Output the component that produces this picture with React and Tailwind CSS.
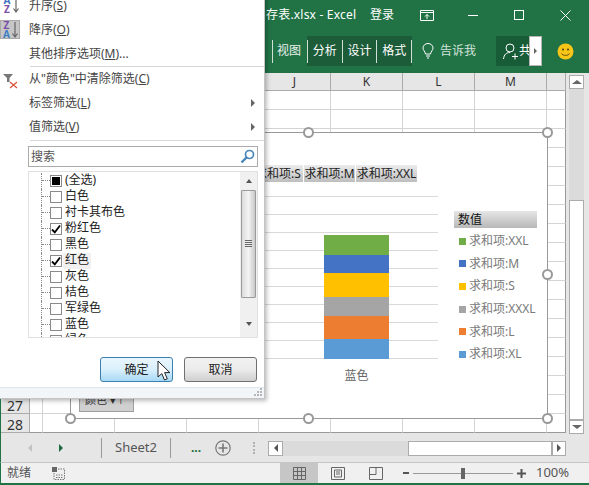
const rows = Array.from({ length: 18 }, (_, i) => i + 11);
const cols = [13, 72, 72, 72, 72, 72, 72, 72, 19];
const headers = ["", "", "", "", "J", "K", "L", "M", ""];
const listItems = [
  ["(全选)", "mixed"], ["白色", ""], ["衬卡其布色", ""], ["粉红色", "on"], ["黑色", ""], ["红色", "on", true],
  ["灰色", ""], ["桔色", ""], ["军绿色", ""], ["蓝色", ""], ["绿色", ""],
];
const legend = [
  ["求和项:XXL", "bg-[#70ad47]"], ["求和项:M", "bg-[#4472c4]"], ["求和项:S", "bg-[#ffc000]"],
  ["求和项:XXXL", "bg-[#a5a5a5]"], ["求和项:L", "bg-[#ed7d31]"], ["求和项:XL", "bg-[#5b9bd5]"],
];

function Handle({ className }) {
  return <span className={"absolute w-[11px] h-[11px] rounded-full bg-white border-2 border-[#999] " + className} />;
}

function MenuRow({ icon, label, arrow }) {
  return (
    <div className="h-6 flex items-center relative pl-[29px] pr-[9px] text-[12px] text-[#444]">
      {icon}
      <span className="flex-1 whitespace-nowrap pt-px">{label}</span>
      {arrow && <span className="w-0 h-0 border-y-[4px] border-y-transparent border-l-[4px] border-l-[#666]" />}
    </div>
  );
}

function Sort({ top, bottom, topC, bottomC, boxed }) {
  return (
    <span className={"absolute left-0 top-[3px] h-[19px] flex " + (boxed ? "w-[20px] bg-[#c6c6c6] border border-[#aaa] pl-[2px]" : "w-[18px]")}>
      <span className="flex flex-col w-[8px] items-center text-[10px] leading-[9px] font-bold">
        <span className={topC}>{top}</span>
        <span className={bottomC}>{bottom}</span>
      </span>
      <svg width="8" height="18" viewBox="0 0 8 18" className="ml-[1px] shrink-0">
        <path d="M4 1V16M1.5 12.5L4 16L6.5 12.5" stroke="#666" fill="none" strokeWidth="1.2" />
      </svg>
    </span>
  );
}

function FilterMenu() {
  return (
    <div className="absolute left-0 -top-[6px] w-[265px] h-[405px] bg-white border-r border-b border-[#c4c4c4] shadow-[2px_2px_4px_rgba(0,0,0,0.25)] flex flex-col z-20">
      <MenuRow label={<span>升序(<u>S</u>)</span>} icon={<span className="absolute left-[3px] -top-[1px]"><Sort top="A" bottom="Z" topC="text-[#4472c4]" bottomC="text-[#7b4fa8]" /></span>} />
      <MenuRow label={<span>降序(<u>O</u>)</span>} icon={<span className="absolute left-0 -top-[1px]"><Sort boxed top="Z" bottom="A" topC="text-[#7b4fa8]" bottomC="text-[#3f7fc4]" /></span>} />
      <MenuRow label={<span>其他排序选项(<u>M</u>)...</span>} />
      <div className="h-px bg-[#d8d8d8] ml-[30px]" />
      <MenuRow
        label={<span>从"颜色"中清除筛选(<u>C</u>)</span>}
        icon={
          <svg width="16" height="16" viewBox="0 0 16 16" className="absolute left-[3px] top-[6px]">
            <path d="M0 1H10L6.5 5V9H4V5Z" fill="#777" />
            <path d="M7 9L14 15M14 9L7 15" stroke="#d9533b" strokeWidth="1.2" />
          </svg>
        }
      />
      <MenuRow label={<span>标签筛选(<u>L</u>)</span>} arrow />
      <MenuRow label={<span>值筛选(<u>V</u>)</span>} arrow />
      <div className="h-px bg-[#d8d8d8] ml-[30px] mt-px" />
      <div className="ml-[28px] mt-[5px] w-[230px] h-[21px] border border-[#ababab] flex items-center justify-between pl-[2px] pr-[2px] text-[12px] text-[#555]">
        <span className="pt-px">搜索</span>
        <svg width="15" height="15" viewBox="0 0 15 15">
          <circle cx="9.5" cy="5.5" r="4" fill="none" stroke="#4a86b8" strokeWidth="1.7" />
          <path d="M6.5 8.5L1.5 13.5" stroke="#4a86b8" strokeWidth="2.4" />
        </svg>
      </div>
      <div className="relative ml-[28px] mt-[4px] w-[230px] h-[168px] border border-[#e0e0e0] flex overflow-hidden">
        <div className="flex-1 pl-[12px] pt-px flex flex-col">
          {listItems.map(([t, s, hl]) => (
            <div key={t} className="h-4 shrink-0 flex items-center text-[12px] text-[#222]">
              <span className="w-[9px] h-full border-l border-dotted border-[#888] flex items-center">
                <span className="w-full border-t border-dotted border-[#888]" />
              </span>
              <span className="w-[12px] h-[12px] border border-[#8a8a8a] bg-white flex items-center justify-center">
                {s === "mixed" && <span className="w-[8px] h-[8px] bg-black" />}
                {s === "on" && (
                  <svg width="10" height="10" viewBox="0 0 10 10">
                    <path d="M1 5.5L3.8 8.3L9 1.5" fill="none" stroke="#000" strokeWidth="1.8" />
                  </svg>
                )}
              </span>
              <span className={"ml-[1px] px-[2px] h-4 leading-[14px] " + (hl ? "bg-[#f0f0f0]" : "")}>{t}</span>
            </div>
          ))}
        </div>
        <div className="w-[17px] bg-[#f0f0f0] flex flex-col items-center">
          <span className="h-[18px] flex items-center justify-center">
            <span className="w-0 h-0 border-x-[3.5px] border-x-transparent border-b-[4px] border-b-[#555]" />
          </span>
          <span className="w-[15px] h-[108px] rounded-[1px] border border-[#9a9a9a] bg-gradient-to-r from-[#dcdcdc] via-[#f4f4f4] to-[#c8c8c8] flex flex-col items-center justify-center gap-[1px]">
            <span className="w-[7px] h-px bg-[#666]" /><span className="w-[7px] h-px bg-[#666]" /><span className="w-[7px] h-px bg-[#666]" /><span className="w-[7px] h-px bg-[#666]" />
          </span>
          <span className="flex-1 flex items-center justify-center pt-[14px]">
            <span className="w-0 h-0 border-x-[3.5px] border-x-transparent border-t-[4px] border-t-[#555]" />
          </span>
        </div>
      </div>
      <div className="mt-[19px] flex pl-[100px] gap-[11px] text-[12px] text-[#222]">
        <button className="w-[73px] h-[25px] rounded-[3px] border border-[#3c7fb1] bg-gradient-to-b from-[#eaf6fd] via-[#d9f0fc] to-[#a7d9f5] text-center">确定</button>
        <button className="w-[73px] h-[25px] rounded-[3px] border border-[#707070] bg-gradient-to-b from-[#f2f2f2] via-[#ebebeb] to-[#cfcfcf] text-center">取消</button>
      </div>
      <div className="mt-[5px] flex-1 bg-[#f3f6f9] border-t border-[#dce7f0] flex items-end justify-end pr-[2px] pb-[2px]">
        <svg width="8" height="8" viewBox="0 0 8 8"><path d="M6 0h2v2H6zM3 3h2v2H3zM6 3h2v2H6zM0 6h2v2H0zM3 6h2v2H3zM6 6h2v2H6z" fill="#b5b5b5" /></svg>
      </div>
      <svg width="14" height="21" viewBox="0 0 14 21" className="absolute left-[157px] top-[366px]">
        <path d="M1 1V17L4.8 13.6L7.5 20L10.3 18.8L7.6 12.6H12.8Z" fill="#fff" stroke="#222" strokeWidth="1" />
      </svg>
    </div>
  );
}

function Chart() {
  return (
    <div className="absolute left-[70px] top-[132px] w-[478px] h-[287px] bg-white border border-[#999] flex z-10 text-[12px]">
      <Handle className="-left-[6px] -top-[6px]" />
      <Handle className="left-[232px] -top-[6px]" />
      <Handle className="-right-[6px] -top-[6px]" />
      <Handle className="-right-[6px] top-[136px]" />
      <Handle className="-left-[6px] -bottom-[6px]" />
      <Handle className="left-[232px] -bottom-[6px]" />
      <Handle className="-right-[6px] -bottom-[6px]" />
      <div className="absolute left-[8px] bottom-[6px] w-[55px] h-[24px] bg-[#d0d0d0] border border-[#a0a0a0] text-[11px] leading-[22px] text-[#333] pl-[5px] whitespace-nowrap">颜色 ▾⊤</div>
      <div className="w-[367px] flex flex-col">
        <div className="mt-[32px] h-[17px] flex justify-end gap-px pr-[21px] text-[#222] leading-[17px]">
          {[["求和项:S", "w-[50px]"], ["求和项:M", "w-[51px]"], ["求和项:XXL", "w-[61px]"]].map(([t, w]) => (
            <span key={t} className={w + " text-center whitespace-nowrap bg-gradient-to-b from-[#ececec] to-[#bebebe]"}>{t}</span>
          ))}
        </div>
        <div className="relative mt-[14px] h-[163px] flex flex-col justify-between">
          {Array.from({ length: 10 }, (_, i) => <div key={i} className="h-px bg-[#d9d9d9]" />)}
          <div className="absolute left-[253px] bottom-0 w-[65px] flex flex-col">
            <div className="h-[20px] bg-[#70ad47]" />
            <div className="h-[18px] bg-[#4472c4]" />
            <div className="h-[24px] bg-[#ffc000]" />
            <div className="h-[19px] bg-[#a5a5a5]" />
            <div className="h-[23px] bg-[#ed7d31]" />
            <div className="h-[20px] bg-[#5b9bd5]" />
          </div>
        </div>
        <div className="ml-[253px] w-[65px] mt-[8px] text-center text-[#666] leading-[18px]">蓝色</div>
      </div>
      <div className="ml-[16px] mt-[78px] w-[83px] flex flex-col">
        <div className="h-[17px] pl-[4px] leading-[17px] text-[#111] bg-gradient-to-b from-[#e6e6e6] to-[#b8b8b8]">数值</div>
        <div className="mt-[2px] flex flex-col">
          {legend.map(([t, c]) => (
            <div key={t} className="h-[22.6px] flex items-center pl-[5px] text-[#7a7a7a] whitespace-nowrap">
              <span className={"w-[7px] h-[7px] mr-[3px] " + c} />
              {t}
            </div>
          ))}
        </div>
      </div>
    </div>
  );
}

export default function App() {
  return (
    <div className="relative w-[589px] h-[485px] overflow-hidden flex flex-col bg-[#e6e6e6] font-['Noto_Sans','Noto_Sans_CJK_SC',sans-serif]">
      {/* title + ribbon */}
      <div className="h-[73px] bg-[#217346] text-white text-[12px] flex flex-col shrink-0">
        <div className="h-[30px] flex items-center pl-[266px]">
          <span className="w-[104px] whitespace-nowrap tracking-[0.2px]">存表.xlsx - Excel</span>
          <span className="w-[42px]">登录</span>
          <svg width="14" height="11" viewBox="0 0 14 11" className="ml-[8px]">
            <path d="M.5 .5H13.5V10.5H.5ZM.5 2.5H13.5M7 9V4.5M5 6.5L7 4.5L9 6.5" stroke="#fff" fill="none" />
          </svg>
          <span className="ml-[34px] w-[10px] h-px bg-white" />
          <span className="ml-[36px] w-[10px] h-[10px] border border-white" />
          <svg width="11" height="11" viewBox="0 0 11 11" className="ml-[36px]">
            <path d="M.5 .5L10.5 10.5M10.5 .5L.5 10.5" stroke="#fff" />
          </svg>
        </div>
        <div className="mt-[6px] h-[30px] flex items-center pl-[272px] text-[12px]">
          <span className="w-px h-[23px] bg-[#cfe0d6]" />
          <span className="w-[35px] pl-[4px] text-[#e8f0eb]">视图</span>
          <div className="w-[105px] h-[30px] -ml-[1px] bg-[#1c5c39] flex items-center">
            {["分析", "设计", "格式"].map((t) => (
              <span key={t} className="w-[35px] h-[23px] border-l border-[#cfe0d6] flex items-center justify-center">{t}</span>
            ))}
            <span className="w-px h-[23px] bg-[#cfe0d6]" />
          </div>
          <svg width="12" height="16" viewBox="0 0 12 16" className="ml-[10px]">
            <path d="M3.5 11C3 8 1 7.5 1 5A5 4.5 0 0 1 11 5C11 7.5 9 8 8.5 11ZM4 13H8M5 15H7" stroke="#fff" fill="none" />
          </svg>
          <span className="ml-[6px] w-[50px] text-[#d3e3da]">告诉我</span>
          <div className="ml-[6px] w-[33px] h-[30px] bg-[#185c37] flex items-center overflow-hidden pl-[7px] gap-[1px]">
            <svg width="15" height="17" viewBox="0 0 15 17" className="shrink-0">
              <circle cx="7" cy="5" r="4" fill="none" stroke="#fff" />
              <path d="M.5 16C1 11.5 3.5 9.5 7 9.5M9 13.5H15M12 10.5V16.5" stroke="#fff" fill="none" />
            </svg>
            <span className="shrink-0">共</span>
          </div>
          <div className="w-[13px] h-[30px] bg-white border border-[#b5b5b5] flex items-center justify-center">
            <span className="w-0 h-0 border-y-[3px] border-y-transparent border-l-[3px] border-l-[#666]" />
          </div>
          <svg width="17" height="17" viewBox="0 0 17 17" className="ml-[15px]">
            <circle cx="8.5" cy="8.5" r="8" fill="#f7c518" />
            <circle cx="6" cy="6.5" r="1.1" fill="#5a4a10" />
            <circle cx="11" cy="6.5" r="1.1" fill="#5a4a10" />
            <path d="M4.5 10.5C6 13 11 13 12.5 10.5" stroke="#5a4a10" fill="none" />
          </svg>
        </div>
      </div>

      {/* sheet */}
      <div className="flex h-[361px] shrink-0 border-l-[1.5px] border-[#217346]">
        <div className="flex flex-col w-[565px]">
          <div className="flex h-[18px] shrink-0">
            <div className="w-[29px] shrink-0 border-r border-[#ababab] border-b" />
            {cols.map((w, i) => (
              <div key={i} style={{ width: w }} className="shrink-0 border-r border-b border-[#ababab] text-center text-[12px] leading-[17px] text-[#333]">
                {headers[i]}
              </div>
            ))}
          </div>
          {rows.map((r) => (
            <div key={r} className="flex h-[19px] shrink-0">
              <div className="w-[29px] shrink-0 border-r border-b border-[#ababab] text-center text-[14px] leading-[21px] text-[#333]">{r}</div>
              {cols.map((w, i) => (
                <div key={i} style={{ width: w }} className={"shrink-0 bg-white border-b " + (r === 28 ? "border-[#999] " : "border-[#d4d4d4] ") + (i === 8 ? "border-r border-r-[#999]" : "border-r border-r-[#d4d4d4]")} />
              ))}
            </div>
          ))}
        </div>
        <div className="ml-[3px] w-[15px] flex flex-col pt-[2px]">
          <div className="h-[14px] bg-white border border-[#ababab] flex items-center justify-center">
            <span className="w-0 h-0 border-x-[5px] border-x-transparent border-b-[4px] border-b-[#666]" />
          </div>
          <div className="h-[111px] bg-[#dbdbdb]" />
          <div className="h-[221px] bg-white border border-[#ababab]" />
          <div className="h-[14px] bg-white border border-[#ababab] flex items-center justify-center">
            <span className="w-0 h-0 border-x-[5px] border-x-transparent border-t-[4px] border-t-[#666]" />
          </div>
        </div>
      </div>

      {/* tab bar */}
      <div className="h-[28px] shrink-0 flex items-center border-l-[1.5px] border-[#217346] text-[#555] relative">
        <span className="ml-[27px] w-0 h-0 border-y-[4px] border-y-transparent border-r-[4px] border-r-[#c2c2c2]" />
        <span className="ml-[27px] w-0 h-0 border-y-[4px] border-y-transparent border-l-[4px] border-l-[#1c6b3f]" />
        <span className="ml-[38px] w-px h-[20px] bg-[#9a9a9a]" />
        <span className="w-[68px] text-center text-[13px]">Sheet2</span>
        <span className="w-px h-[20px] bg-[#9a9a9a]" />
        <span className="ml-[20px] w-[12px] text-[12px] font-bold text-[#1c6b3f] leading-[12px]">...</span>
        <svg width="16" height="16" viewBox="0 0 16 16" className="ml-[12px]">
          <circle cx="8" cy="8" r="7.2" fill="none" stroke="#777" strokeWidth="1.2" />
          <path d="M8 3.5V12.5M3.5 8H12.5" stroke="#777" strokeWidth="1.6" />
        </svg>
        <span className="ml-[22px] w-[3px] h-[12px] border-l-2 border-dotted border-[#b0b0b0]" />
        <div className="ml-[12px] w-[298px] h-[15px] flex">
          <span className="w-[15px] bg-white border border-[#ababab] flex items-center justify-center">
            <span className="w-0 h-0 border-y-[4px] border-y-transparent border-r-[4px] border-r-[#555]" />
          </span>
          <span className="w-[125px] bg-[#dbdbdb]" />
          <span className="w-[144px] bg-white border border-[#ababab]" />
          <span className="w-[14px] bg-white border border-[#ababab] flex items-center justify-center">
            <span className="w-0 h-0 border-y-[4px] border-y-transparent border-l-[4px] border-l-[#555]" />
          </span>
        </div>
      </div>

      {/* status bar */}
      <div className="flex-1 bg-[#f0f0f0] border-t border-[#c6c6c6] border-b-2 border-b-[#217346] border-l-[1.5px] border-l-[#217346] flex items-center text-[12px] text-[#555]">
        <span className="ml-[6px] w-[38px]">就绪</span>
        <svg width="13" height="13" viewBox="0 0 13 13" className="ml-[7px]">
          <rect x="0" y="0" width="5" height="5" fill="#666" />
          <path d="M6 2H12.5V12.5H2V6M4 8H11M4 10.5H11" stroke="#777" fill="none" strokeDasharray="1.5 1" />
        </svg>
        <span className="ml-[215px] w-[38px] h-[20px] bg-[#c6c6c6] flex items-center justify-center">
          <svg width="13" height="13" viewBox="0 0 13 13"><path d="M.5 .5H12.5V12.5H.5ZM.5 4.5H12.5M.5 8.5H12.5M4.5 .5V12.5M8.5 .5V12.5" stroke="#666" fill="none" /></svg>
        </span>
        <span className="w-[39px] flex justify-center">
          <svg width="14" height="13" viewBox="0 0 14 13"><path d="M.5 .5H13.5V12.5H.5ZM3.5 3H10.5V10H3.5ZM5 5H9M5 7H9" stroke="#666" fill="none" /></svg>
        </span>
        <span className="w-[38px] flex justify-center">
          <svg width="14" height="13" viewBox="0 0 14 13"><path d="M.5 .5H13.5V12.5H.5ZM.5 7.5H7V.5" stroke="#666" fill="none" /></svg>
        </span>
        <span className="ml-[8px] w-[6px] h-[2px] bg-[#555]" />
        <span className="relative ml-[4px] w-[100px] h-px bg-[#999]">
          <span className="absolute left-[48px] -top-[5px] w-[4px] h-[11px] bg-[#666]" />
        </span>
        <svg width="9" height="9" viewBox="0 0 9 9" className="ml-[4px]"><path d="M0 4.5H9M4.5 0V9" stroke="#555" strokeWidth="2" /></svg>
        <span className="ml-[10px] text-[13px]">100%</span>
      </div>

      <Chart />
      <FilterMenu />
    </div>
  );
}
